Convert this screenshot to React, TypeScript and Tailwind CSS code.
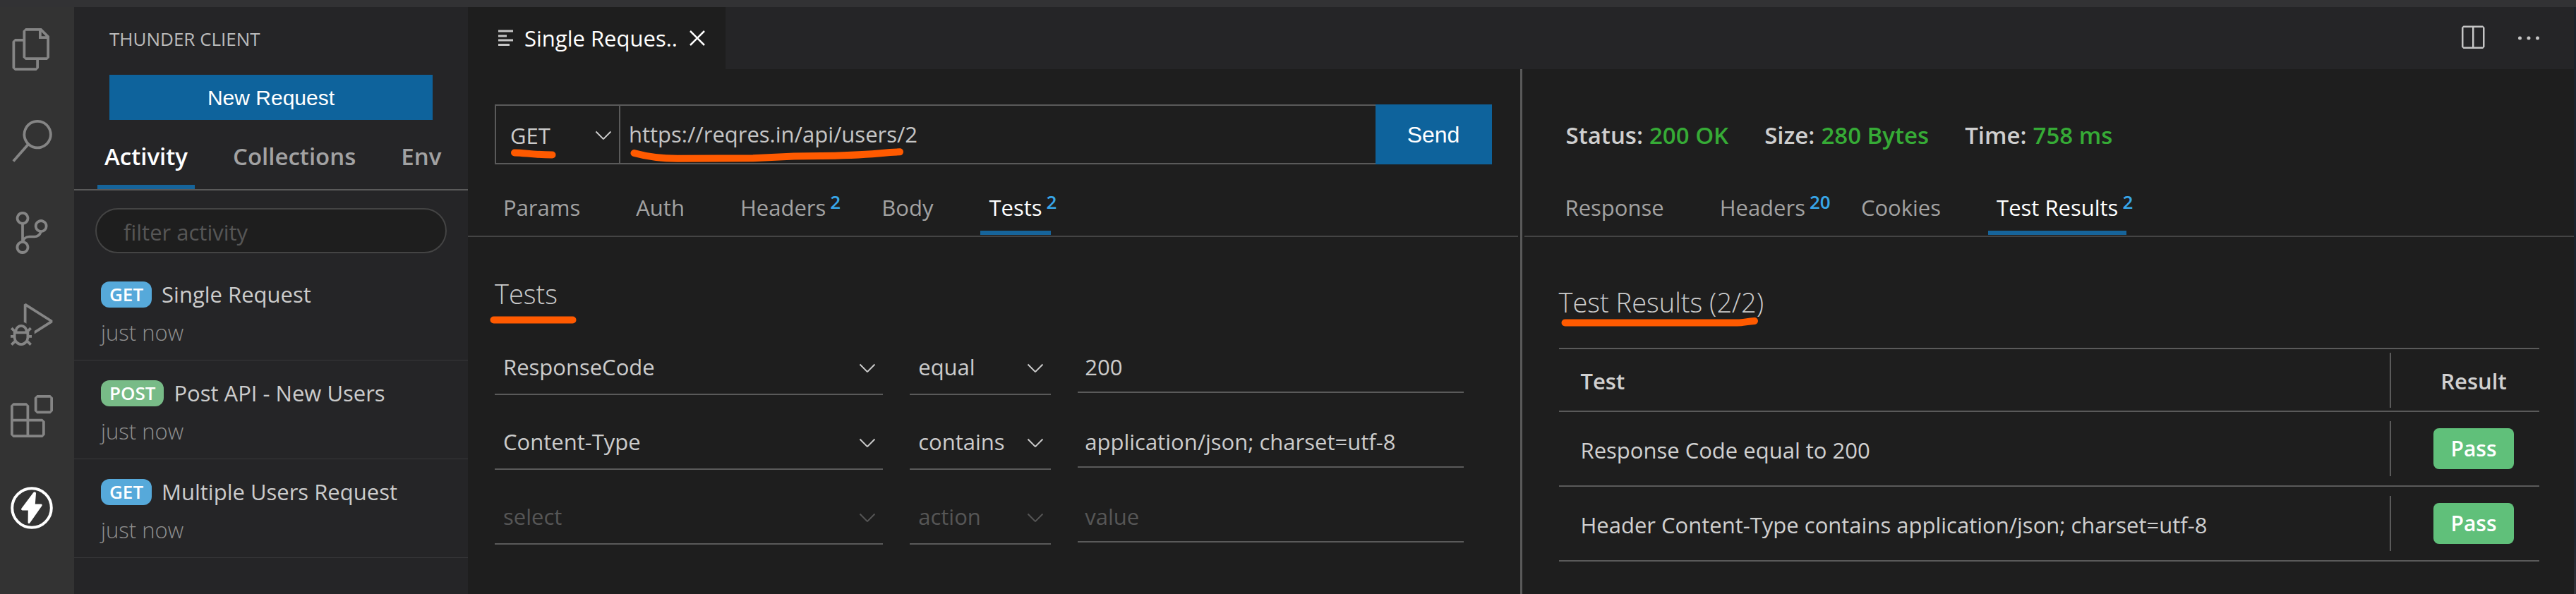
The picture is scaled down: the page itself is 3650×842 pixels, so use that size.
import type { ReactNode } from "react";
import {
  VscChevronDown,
  VscClose,
  VscDebugAlt,
  VscEllipsis,
  VscExtensions,
  VscFiles,
  VscSearch,
  VscSourceControl,
  VscSplitHorizontal,
} from "react-icons/vsc";

function ThunderIcon() {
  return (
    <svg viewBox="0 0 60 60" className="size-[60px]" aria-hidden="true">
      <circle cx="30" cy="30" r="27.8" fill="none" stroke="currentColor" strokeWidth="4" />
      <path
        fill="currentColor"
        d="M32.2 8.2 15.4 30.8c-.9 1.2-.1 2.6 1.2 2.6h8.2L24.600 50.400c0 1.800 1.900 2.300 2.800.8L44.400 27c.8-1.200.1-2.400-1.200-2.400h-8.400L36 9.200c.1-1.900-2.500-2.700-3.800-1z"
      />
    </svg>
  );
}

function LinesIcon() {
  return (
    <svg viewBox="0 0 21 24" className="h-6 w-[21px] text-[#c5c5c5]" aria-hidden="true">
      <path
        fill="currentColor"
        d="M0 .5h21v3H0zM0 7.500h12v3H0zM0 13.500h21v3H0zM0 20h16v3H0z"
      />
    </svg>
  );
}

/* Freehand highlighter stroke laid over the interface. */
function Stroke({ className, viewBox, d }: { className: string; viewBox: string; d: string }) {
  return (
    <svg
      viewBox={viewBox}
      className={`pointer-events-none absolute ${className}`}
      fill="none"
      stroke="#ff5a00"
      strokeWidth="10"
      strokeLinecap="round"
      strokeLinejoin="round"
      aria-hidden="true"
    >
      <path d={d} />
    </svg>
  );
}

const activities: { label: string; icon: ReactNode; active?: boolean }[] = [
  { label: "Explorer", icon: <VscFiles /> },
  { label: "Search", icon: <VscSearch /> },
  { label: "Source Control", icon: <VscSourceControl /> },
  { label: "Run and Debug", icon: <VscDebugAlt /> },
  { label: "Extensions", icon: <VscExtensions /> },
  { label: "Thunder Client", icon: <ThunderIcon />, active: true },
];

function ActivityBar() {
  return (
    <nav className="flex w-[105px] shrink-0 flex-col gap-[70px] bg-[#333333] pt-[30px] pl-[15px] text-[60px]">
      {activities.map((a) => (
        <button
          key={a.label}
          aria-label={a.label}
          className={`size-[60px] ${a.active ? "text-white" : "text-[#858585]"}`}
        >
          {a.icon}
        </button>
      ))}
    </nav>
  );
}

const history = [
  { method: "GET", name: "Single Request" },
  { method: "POST", name: "Post API - New Users" },
  { method: "GET", name: "Multiple Users Request" },
];

function Sidebar() {
  return (
    <aside className="flex w-[558px] shrink-0 flex-col bg-[#252527]">
      <h1 className="mt-[30px] px-[50px] text-[26px] leading-[30px] text-[#bbbbbb]">
        THUNDER CLIENT
      </h1>
      <button className="mx-[50px] mt-9 h-16 bg-[#0e639c] font-['Liberation_Sans',sans-serif] text-[30px] text-white">
        New Request
      </button>
      <div className="flex gap-11 border-b-2 border-[#5a5a5a] pt-8 pl-[33px] text-[33px] leading-10 font-semibold text-[#a2a2a3]">
        {["Activity", "Collections", "Env"].map((t, i) => (
          <button
            key={t}
            className={`border-b-6 px-[10px] pb-5 ${
              i === 0 ? "border-[#16649a] text-white" : "border-transparent"
            }`}
          >
            {t}
          </button>
        ))}
      </div>
      <input
        aria-label="filter activity"
        placeholder="filter activity"
        className="mx-[30px] mt-[25px] h-16 rounded-full border-2 border-[#444444] bg-[#1e1e1e] px-[38px] pt-1 text-[31px] text-[#cccccc] placeholder:text-[#565656]"
      />
      <ul className="mt-3">
        {history.map((h) => (
          <li key={h.name} className="border-b border-[#37373a] px-[38px] pt-7 pb-[19px]">
            <div className="flex items-center gap-[14px]">
              <span
                className={`rounded-xl px-3 text-[26px] leading-[37px] font-semibold text-white ${
                  h.method === "GET" ? "bg-[#56a9da]" : "bg-[#78bb87]"
                }`}
              >
                {h.method}
              </span>
              <a href="#" className="text-[31px] leading-[37px] text-[#cccccc]">
                {h.name}
              </a>
            </div>
            <p className="mt-[15px] text-[31px] leading-10 font-light text-[#909090]">just now</p>
          </li>
        ))}
      </ul>
    </aside>
  );
}

function EditorTabs() {
  return (
    <header className="flex h-[88px] items-center justify-between bg-[#252527] pr-11">
      <div className="flex h-full items-center bg-[#1e1e1e] pr-5 pl-[43px] text-white">
        <LinesIcon />
        <span className="ml-4 text-[31px]">Single Reques..</span>
        <button aria-label="Close tab" className="ml-2 text-[40px]">
          <VscClose />
        </button>
      </div>
      <div className="flex gap-10 text-[40px] text-[#c5c5c5]">
        <button aria-label="Split editor">
          <VscSplitHorizontal />
        </button>
        <button aria-label="More actions">
          <VscEllipsis />
        </button>
      </div>
    </header>
  );
}

interface Tab {
  label: string;
  count?: number;
  active?: boolean;
}

function PanelTabs({ tabs, className }: { tabs: Tab[]; className: string }) {
  return (
    <div
      className={`flex gap-[55px] border-b-2 border-[#444444] text-[31px] leading-10 text-[#a2a2a2] ${className}`}
    >
      {tabs.map((t) => (
        <button
          key={t.label}
          className={`relative mb-px border-b-6 px-3 pb-[13px] ${
            t.active ? "border-[#16649a] font-medium text-white" : "border-transparent"
          }`}
        >
          {t.label}
          {t.count !== undefined && (
            <sup className="absolute -top-[3px] left-full -ml-[6px] text-[26px] leading-[30px] font-semibold text-[#38a6e8]">
              {t.count}
            </sup>
          )}
        </button>
      ))}
    </div>
  );
}

function Dropdown({
  label,
  value,
  muted,
  className,
}: {
  label: string;
  value: string;
  muted?: boolean;
  className: string;
}) {
  return (
    <div
      className={`relative flex items-center ${muted ? "text-[#565656]" : "text-[#cccccc]"}`}
    >
      <select
        aria-label={label}
        defaultValue={value}
        className={`w-full appearance-none bg-transparent text-[31px] ${className}`}
      >
        <option>{value}</option>
      </select>
      <VscChevronDown className="pointer-events-none absolute right-1 text-[36px]" />
    </div>
  );
}

const checks = [
  { field: "ResponseCode", action: "equal", value: "200" },
  { field: "Content-Type", action: "contains", value: "application/json; charset=utf-8" },
  { field: "select", action: "action", value: "", muted: true },
];

function RequestPanel() {
  return (
    <section className="min-w-0 flex-1">
      <div className="mt-[50px] mr-[37px] ml-[38px] flex h-[85px]">
        <div className="relative grid w-[178px] shrink-0 border-2 border-[#5a5a5a]">
          <Dropdown label="Method" value="GET" className="h-full pt-1 pl-5" />
          <Stroke
            className="top-[61px] left-[21px] h-[14px] w-[64px]"
            viewBox="0 0 64 14"
            d="M5 5.500C20 5.500 30 8.500 58.500 8.500"
          />
        </div>
        <div className="relative min-w-0 flex-1 border-y-2 border-[#5a5a5a]">
          <input
            aria-label="Request URL"
            defaultValue="https://reqres.in/api/users/2"
            className="h-full w-full bg-transparent px-3 pb-[2px] text-[31px] text-[#c5c5c5]"
          />
          <Stroke
            className="top-[60px] left-[14px] h-5 w-[388px]"
            viewBox="0 0 388 20"
            d="M5.500 7C20 11 38 14.700 67 14.700L174 14.300 232 11.500 290 10.700C330 9.500 345 8.500 368 6L382 5.300"
          />
        </div>
        <button className="w-[165px] shrink-0 bg-[#0e639c] font-['Liberation_Sans',sans-serif] text-[32px] text-white">
          Send
        </button>
      </div>
      <PanelTabs
        className="pt-[41px] pl-[38px]"
        tabs={[
          { label: "Params" },
          { label: "Auth" },
          { label: "Headers", count: 2 },
          { label: "Body" },
          { label: "Tests", count: 2, active: true },
        ]}
      />
      <div className="pt-14 pr-[76px] pl-[38px]">
        <h2 className="relative text-[38px] leading-[48px] font-light text-[#cccccc]">
          Tests
          <Stroke
            className="top-[56px] -left-[7px] h-3 w-[123px]"
            viewBox="0 0 123 12"
            d="M5.500 5.500H117.500"
          />
        </h2>
        <div className="mt-[42px] grid gap-7">
          {checks.map((c) => (
            <div
              key={c.field}
              className="grid grid-cols-[minmax(0,551fr)_200px_minmax(0,548fr)] items-center gap-[38px]"
            >
              <Dropdown
                label="Test field"
                value={c.field}
                muted={c.muted}
                className="h-[78px] border-b-2 border-[#5a5a5a] pl-3"
              />
              <Dropdown
                label="Test action"
                value={c.action}
                muted={c.muted}
                className="h-[78px] border-b-2 border-[#5a5a5a] pl-3"
              />
              <input
                aria-label="Test value"
                defaultValue={c.value}
                placeholder="value"
                className="h-[72px] w-full border-b-2 border-[#5a5a5a] bg-transparent pl-[10px] text-[31px] text-[#cccccc] placeholder:text-[#565656]"
              />
            </div>
          ))}
        </div>
      </div>
    </section>
  );
}

const stats = [
  { label: "Status:", value: "200 OK" },
  { label: "Size:", value: "280 Bytes" },
  { label: "Time:", value: "758 ms" },
];

const results = [
  "Response Code equal to 200",
  "Header Content-Type contains application/json; charset=utf-8",
];

function ResponsePanel() {
  return (
    <section className="min-w-0 flex-1">
      <dl className="mt-[70px] flex gap-[51px] pl-[59px] text-[33px] leading-[48px] font-semibold">
        {stats.map((s) => (
          <div key={s.label} className="flex gap-[9px]">
            <dt className="text-[#cfcfcf]">{s.label}</dt>
            <dd className="text-[#36ab36]">{s.value}</dd>
          </div>
        ))}
      </dl>
      <PanelTabs
        className="pt-[58px] pl-[46px]"
        tabs={[
          { label: "Response" },
          { label: "Headers", count: 20 },
          { label: "Cookies" },
          { label: "Test Results", count: 2, active: true },
        ]}
      />
      <div className="px-[49px] pt-[68px]">
        <h2 className="relative text-[38px] leading-[48px] font-light text-[#cccccc]">
          Test Results (2/2)
          <Stroke
            className="top-[46px] left-[3px] h-[14px] w-[280px]"
            viewBox="0 0 280 14"
            d="M5.500 7.500H250C258 7.500 264 5.500 274 5"
          />
        </h2>
        <table className="mt-[41px] w-full border-separate border-spacing-0 border-t-2 border-[#5a5a5a] text-[31px] text-[#d0d0d0]">
          <thead>
            <tr className="h-[89px]">
              <th className="border-b-2 border-[#5a5a5a] pt-1 pl-[31px] text-left font-semibold">
                Test
              </th>
              <th className="w-[212px] border-b-2 border-[#5a5a5a] p-0 font-semibold">
                <div className="flex h-[78px] items-center justify-center border-l-2 border-[#5a5a5a] pt-1 pl-6">
                  Result
                </div>
              </th>
            </tr>
          </thead>
          <tbody>
            {results.map((r) => (
              <tr key={r} className="h-[106px]">
                <td className="border-b-2 border-[#5a5a5a] pt-1 pl-[31px]">{r}</td>
                <td className="border-b-2 border-[#5a5a5a] p-0">
                  <div className="flex h-[78px] items-center justify-center border-l-2 border-[#5a5a5a] pl-6">
                    <span className="rounded-lg bg-[#60c07a] px-6 text-[30px] leading-[58px] font-semibold text-white">
                      Pass
                    </span>
                  </div>
                </td>
              </tr>
            ))}
          </tbody>
        </table>
      </div>
    </section>
  );
}

export default function App() {
  return (
    <div className="flex min-h-screen flex-col bg-[#1e1e1e] font-['Open_Sans','Noto_Sans',sans-serif]">
      <div className="h-[10px] bg-[#323234]" />
      <div className="flex flex-1">
        <ActivityBar />
        <Sidebar />
        <main className="flex min-w-0 flex-1 flex-col">
          <EditorTabs />
          <div className="flex flex-1">
            <RequestPanel />
            <div className="mx-[3px] w-[3px] bg-[#5a5a5a]" />
            <ResponsePanel />
          </div>
        </main>
        <div className="w-[3px] bg-linear-to-b from-[#1c222c] from-90% to-[#33333a]" />
      </div>
    </div>
  );
}
